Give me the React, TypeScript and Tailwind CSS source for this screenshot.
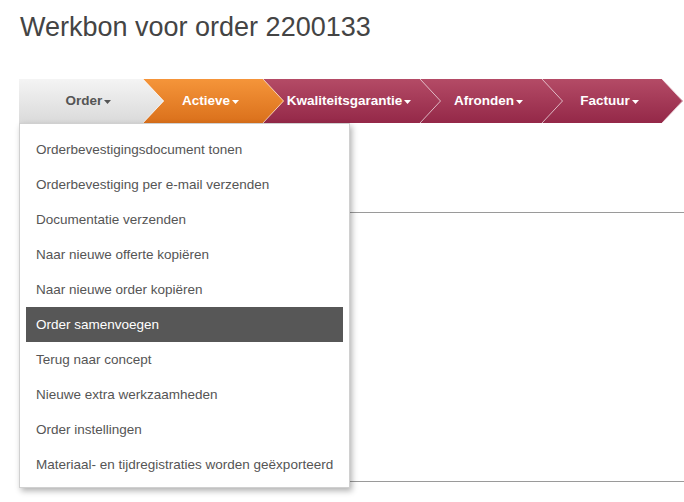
import React from "react";

type SegProps = {
  w: number;
  label: string;
  from: string;
  to: string;
  light?: boolean;
  z: string;
  id: string;
};

function Caret({ color }: { color: string }) {
  return (
    <svg width="7" height="4" viewBox="0 0 7 4" className="ml-[2px] mt-[1px]">
      <polygon points="0,0 7,0 3.5,4" fill={color} />
    </svg>
  );
}

function Seg({ w, label, from, to, light, z, id }: SegProps) {
  const total = w + 21;
  return (
    <div
      className={`relative h-[44px] flex-none mr-[-21px] ${z}`}
      style={{ width: total }}
    >
      <svg
        className="absolute left-0 top-0"
        width={total}
        height={44}
        viewBox={`0 0 ${total} 44`}
      >
        <defs>
          <linearGradient id={id} x1="0" y1="0" x2="0" y2="1">
            <stop offset="0" stopColor={from} />
            <stop offset="1" stopColor={to} />
          </linearGradient>
        </defs>
        <polygon
          points={`0,0 ${w},0 ${total},22 ${w},44 0,44`}
          fill={`url(#${id})`}
        />
        <polyline
          points={`${w},0 ${total - 0.5},22 ${w},44`}
          fill="none"
          stroke="rgba(255,255,255,0.65)"
          strokeWidth="1"
        />
      </svg>
      <div
        className={`relative flex h-full items-center justify-center pr-[6px] text-[13.5px] font-bold ${
          light ? "text-white" : "text-[#555]"
        }`}
      >
        <span>{label}</span>
        <Caret color={light ? "#ffffff" : "#555555"} />
      </div>
    </div>
  );
}

const items = [
  "Orderbevestigingsdocument tonen",
  "Orderbevestiging per e-mail verzenden",
  "Documentatie verzenden",
  "Naar nieuwe offerte kopiëren",
  "Naar nieuwe order kopiëren",
  "Order samenvoegen",
  "Terug naar concept",
  "Nieuwe extra werkzaamheden",
  "Order instellingen",
  "Materiaal- en tijdregistraties worden geëxporteerd",
];

export default function App() {
  return (
    <div
      className="min-h-[502px] w-[684px] overflow-hidden bg-white pl-[19px]"
      style={{ fontFamily: '"Liberation Sans", Arial, sans-serif' }}
    >
      <h1 className="ml-px mt-[12px] text-[27px] font-normal leading-[30px] text-[#444]">
        Werkbon voor order 2200133
      </h1>

      <div className="relative mt-[37px]">
        <div className="flex">
          <Seg id="g1" w={124} label="Order" from="#f4f4f4" to="#dadada" z="z-50" />
          <Seg id="g2" w={120} label="Actieve" from="#f5953a" to="#da701b" light z="z-40" />
          <Seg id="g3" w={157} label="Kwaliteitsgarantie" from="#b44b66" to="#942848" light z="z-30" />
          <Seg id="g4" w={122} label="Afronden" from="#b44b66" to="#942848" light z="z-20" />
          <Seg id="g5" w={120} label="Factuur" from="#b44b66" to="#942848" light z="z-10" />
        </div>

        <div className="h-[89px]" />
        <div className="h-px bg-[#9a9a9a]" />
        <div className="h-[268px]" />
        <div className="h-px bg-[#9a9a9a]" />

        <div className="absolute left-0 top-[44px] z-50 w-[331px] border border-[#d0d0d0] bg-white px-[6px] pb-[5px] pt-[8px] shadow-[2px_3px_6px_rgba(0,0,0,0.3)]">
          {items.map((t, i) => (
            <div
              key={t}
              className={`h-[35px] whitespace-nowrap px-[10px] text-[13.5px] leading-[35px] ${
                i === 5 ? "bg-[#575757] text-white" : "text-[#555]"
              }`}
            >
              {t}
            </div>
          ))}
        </div>
      </div>
    </div>
  );
}
